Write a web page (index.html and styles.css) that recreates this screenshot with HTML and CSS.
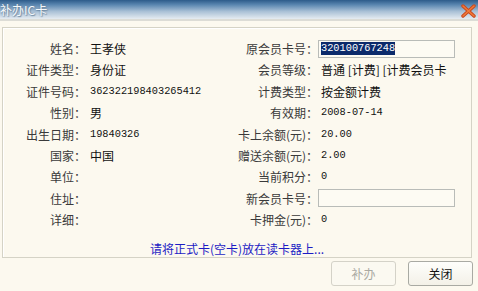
FILE: index.html
```html
<!DOCTYPE html>
<html>
<head>
<meta charset="utf-8">
<link rel="stylesheet" href="styles.css">
</head>
<body>
<div class="window">
  <div class="titlebar">
    <span class="title">补办IC卡</span>
    <svg class="close" width="15" height="14" viewBox="0 0 15 14">
      <path d="M2 2 L13 12 M13 2 L2 12" stroke="#c8461c" stroke-width="3.4" stroke-linecap="round"/>
      <path d="M2 2 L13 12 M13 2 L2 12" stroke="#f07a3a" stroke-width="1.6" stroke-linecap="round"/>
    </svg>
  </div>
  <div class="sep"></div>
  <div class="group">
    <div class="grid">
      <div class="lab">姓名：</div><div class="val">王孝侠</div>
      <div class="lab">原会员卡号：</div><div class="val inputcell"><div class="input"><span class="sel">320100767248</span></div></div>

      <div class="lab">证件类型：</div><div class="val">身份证</div>
      <div class="lab">会员等级：</div><div class="val">普通 [计费] [计费会员卡</div>

      <div class="lab">证件号码：</div><div class="val num">362322198403265412</div>
      <div class="lab">计费类型：</div><div class="val">按金额计费</div>

      <div class="lab">性别：</div><div class="val">男</div>
      <div class="lab">有效期：</div><div class="val num">2008-07-14</div>

      <div class="lab">出生日期：</div><div class="val num">19840326</div>
      <div class="lab">卡上余额(元)：</div><div class="val num">20.00</div>

      <div class="lab">国家：</div><div class="val">中国</div>
      <div class="lab">赠送余额(元)：</div><div class="val num">2.00</div>

      <div class="lab">单位：</div><div class="val"></div>
      <div class="lab">当前积分：</div><div class="val num">0</div>

      <div class="lab">住址：</div><div class="val"></div>
      <div class="lab">新会员卡号：</div><div class="val inputcell"><div class="input"></div></div>

      <div class="lab">详细：</div><div class="val"></div>
      <div class="lab">卡押金(元)：</div><div class="val num">0</div>
    </div>
    <div class="msg">请将正式卡(空卡)放在读卡器上...</div>
  </div>
  <div class="buttons">
    <button class="btn disabled">补办</button>
    <button class="btn">关闭</button>
  </div>
</div>
</body>
</html>
```
FILE: styles.css
```css
html, body {
  margin: 0;
  padding: 0;
  background: #fcf9ef;
}
.window {
  width: 478px;
  height: 291px;
  overflow: hidden;
  font-family: "Noto Sans CJK SC", "DejaVu Sans", sans-serif;
  font-size: 12px;
  color: #222;
}
.titlebar {
  height: 19px;
  display: flex;
  align-items: center;
  justify-content: space-between;
  background: linear-gradient(to bottom, #2d5b8a 0%, #5a86b0 25%, #a9c0d6 60%, #e6ecf1 100%);
}
.title {
  margin-left: 0;
  color: #f4f8fb;
  font-size: 12px;
  text-shadow: 0 0 2px #5a7895, 1px 1px 1px #7d95ac;
  line-height: 19px;
}
.close {
  margin-right: 2px;
  margin-top: 2px;
}
.sep {
  height: 2px;
  background: #dcdcd6;
}
.group {
  margin: 6px 6px 0 2px;
  height: 229px;
  border: 1px solid #d5d3c6;
  box-shadow: inset 1px 1px 0 #ffffff;
  display: flex;
  flex-direction: column;
}
.grid {
  display: grid;
  grid-template-columns: 83px 146px 86px 138px;
  grid-auto-rows: 21.4px;
  margin-top: 10px;
}
.lab {
  text-align: right;
  line-height: 21.4px;
  color: #3a3a3a;
  white-space: nowrap;
}
.val {
  line-height: 21.4px;
  padding-left: 3px;
  white-space: nowrap;
  color: #111;
}
.grid > .val:nth-child(4n+2) {
  padding-left: 4px;
}
.num {
  font-family: "Liberation Mono", "DejaVu Sans Mono", monospace;
  font-size: 10.3px;
}
.inputcell {
  padding-left: 0;
  display: flex;
  align-items: center;
}
.input {
  width: 133px;
  height: 16px;
  border: 1px solid #b9bcb8;
  background: #fdfbf3;
  display: flex;
  align-items: center;
  padding-left: 2px;
}
.sel {
  background: #0b2a6b;
  color: #ffffff;
  font-family: "Liberation Mono", "DejaVu Sans Mono", monospace;
  font-size: 10.3px;
  line-height: 13px;
}
.msg {
  margin-top: auto;
  margin-bottom: 0;
  text-align: center;
  color: #1c1cc4;
  line-height: 16px;
}
.buttons {
  display: flex;
  justify-content: flex-end;
  gap: 12px;
  margin-top: 3px;
  margin-right: 5px;
}
.btn {
  width: 65px;
  height: 25px;
  font-family: "Noto Sans CJK SC", sans-serif;
  font-size: 12px;
  color: #111;
  background: linear-gradient(to bottom, #fefefb, #f3f1e8);
  border: 1px solid #a9aaa3;
  border-radius: 3px;
  padding: 0;
}
.btn.disabled {
  color: #aaa9a2;
  border-color: #d4d2c8;
  background: #fbf9f1;
}
```
